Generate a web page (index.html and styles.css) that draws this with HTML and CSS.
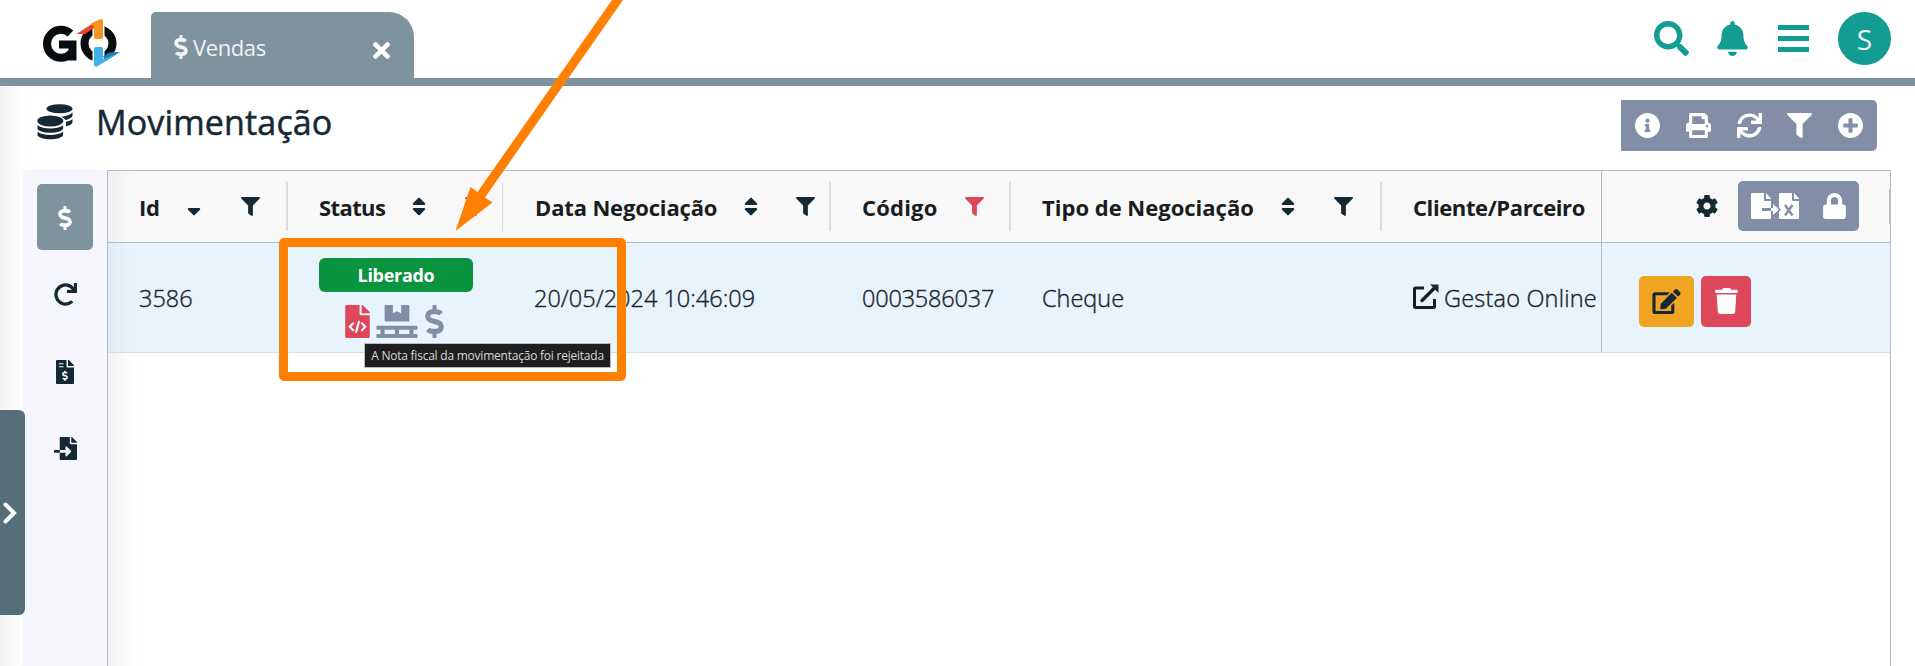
FILE: index.html
```html
<!DOCTYPE html>
<html lang="pt-BR">
<head>
<meta charset="utf-8">
<title>Movimentação</title>
<link rel="stylesheet" href="styles.css">
</head>
<body>
<svg class="defs" aria-hidden="true">
  <symbol id="dollar" viewBox="0 0 288 512"><path d="M209.2 233.4l-108-31.6C88.7 198.2 80 186.5 80 173.5c0-16.3 13.2-29.5 29.5-29.5h66.3c12.2 0 24.2 3.7 34.2 10.5 6.1 4.1 14.3 3.1 19.5-2l34.8-34c7.1-6.9 6.1-18.4-1.8-24.5C238 74.8 207.4 64.1 176 64V16c0-8.8-7.2-16-16-16h-32c-8.8 0-16 7.2-16 16v48h-2.5C45.8 64-5.4 118.7.5 183.6c4.2 46.1 39.4 83.6 83.8 96.6l102.5 30c12.5 3.7 21.2 15.3 21.2 28.3 0 16.3-13.2 29.5-29.5 29.5h-66.3C100 368 88 364.3 78 357.5c-6.1-4.1-14.3-3.1-19.5 2l-34.8 34c-7.1 6.9-6.1 18.4 1.8 24.5 24.5 19.2 55.1 29.9 86.5 30v48c0 8.8 7.2 16 16 16h32c8.8 0 16-7.2 16-16v-48.2c46.6-.9 90.3-28.6 105.7-72.7 21.5-61.6-14.6-124.8-72.5-141.7z"/></symbol>
  <symbol id="filter" viewBox="0 0 512 512"><path d="M487.976 0H24.028C2.71 0-8.047 25.866 7.058 40.971L192 225.941V432c0 7.831 3.821 15.17 10.237 19.662l80 55.98C298.02 518.69 320 507.493 320 487.98V225.941l184.947-184.97C520.021 25.896 509.338 0 487.976 0z"/></symbol>
  <symbol id="sort" viewBox="0 0 320 512"><path d="M41 288h238c21.4 0 32.1 25.9 17 41L177 448c-9.4 9.4-24.6 9.4-33.9 0L24 329c-15.1-15.1-4.4-41 17-41zm255-105L177 64c-9.4-9.4-24.6-9.4-33.9 0L24 183c-15.1 15.1-4.4 41 17 41h238c21.4 0 32.1-25.9 17-41z"/></symbol>
  <symbol id="sort-down" viewBox="0 0 320 512"><path d="M41 288h238c21.4 0 32.1 25.9 17 41L177 448c-9.4 9.4-24.6 9.4-33.9 0L24 329c-15.1-15.1-4.4-41 17-41z"/></symbol>
  <symbol id="file" viewBox="0 0 384 512"><path d="M384 121.9v6.1H256V0h6.1c6.4 0 12.5 2.5 17 7l97.9 98c4.5 4.5 7 10.6 7 16.9zM248 160c-13.2 0-24-10.8-24-24V0H24C10.7 0 0 10.7 0 24v464c0 13.3 10.7 24 24 24h336c13.3 0 24-10.7 24-24V160H248z"/></symbol>
</svg>

<header class="topbar">
  <svg class="logo" viewBox="0 0 78 48" role="img" aria-label="GO">
    <path class="logo-dark" fill="none" stroke-width="8" d="M28.500 14.500A14 14 0 1 0 29.500 34M17 25.500H30.500V41.500"/>
    <circle class="logo-dark" cx="56.500" cy="24.500" r="14" fill="none" stroke-width="8"/>
    <path fill="#fff" d="M50.500 4h12v17h-12zM50.500 28h12v17h-12z"/>
    <path fill="#e8432e" d="M34.500 15 52 3.500V9l-9 6z"/>
    <path fill="#f7931e" d="M48 5 58 .3q3-1 3 2V18q0 2-2 2h-5q-2 0-2-2V7z"/>
    <path fill="#1a7fb0" d="M61 37.500l6-4 11-.5-14 9z"/>
    <path fill="#3fb0e8" d="M52 30q0-2 2-2h5q2 0 2 2v10l14-5-20 12.500q-3 1-3-2z"/>
  </svg>
  <div class="tab">
    <svg class="tab-icon"><use href="#dollar"/></svg>
    <span class="tab-label">Vendas</span>
    <svg class="tab-close" viewBox="0 0 352 352"><path transform="translate(0 -80)" d="M242.72 256l100.07-100.07c12.28-12.28 12.28-32.19 0-44.48l-22.24-22.24c-12.28-12.28-32.19-12.28-44.48 0L176 189.28 75.93 89.21c-12.28-12.28-32.19-12.28-44.48 0L9.21 111.45c-12.28 12.28-12.28 32.19 0 44.48L109.28 256 9.21 356.07c-12.28 12.28-12.28 32.19 0 44.48l22.24 22.24c12.28 12.28 32.2 12.28 44.48 0L176 322.72l100.07 100.07c12.28 12.28 32.2 12.28 44.48 0l22.24-22.24c12.28-12.28 12.28-32.19 0-44.48L242.72 256z"/></svg>
  </div>
  <nav class="top-actions">
    <svg class="ic-search" viewBox="0 0 512 512"><path d="M505 442.7L405.3 343c-4.5-4.5-10.6-7-17-7H372c27.6-35.3 44-79.7 44-128C416 93.1 322.9 0 208 0S0 93.1 0 208s93.1 208 208 208c48.3 0 92.7-16.4 128-44v16.3c0 6.4 2.5 12.5 7 17l99.7 99.7c9.4 9.4 24.6 9.4 33.900 0l28.3-28.3c9.4-9.4 9.4-24.6.1-34zM208 336c-70.7 0-128-57.2-128-128 0-70.7 57.2-128 128-128 70.7 0 128 57.2 128 128 0 70.7-57.2 128-128 128z"/></svg>
    <svg class="ic-bell" viewBox="0 0 448 512"><path d="M224 512c35.32 0 63.97-28.65 63.97-64H160.03c0 35.35 28.65 64 63.97 64zm215.39-149.71c-19.32-20.76-55.47-51.99-55.47-154.29 0-77.7-54.48-139.9-127.94-155.16V32c0-17.67-14.32-32-31.98-32s-31.98 14.33-31.98 32v20.84C118.56 68.1 64.08 130.3 64.08 208c0 102.3-36.15 133.53-55.47 154.29-6 6.45-8.66 14.16-8.61 21.71.11 16.4 12.98 32 32.1 32h383.8c19.12 0 32-15.6 32.1-32 .05-7.55-2.61-15.27-8.61-21.71z"/></svg>
    <svg class="ic-menu" viewBox="0 0 31 27"><path d="M0 0h31v5H0zM0 11h31v5H0zM0 22h31v5H0z"/></svg>
    <span class="avatar">S</span>
  </nav>
</header>

<main class="page">
  <div class="title-row">
    <svg class="coins" viewBox="0 0 36 36">
      <ellipse cx="22.500" cy="4.700" rx="13" ry="4.500"/>
      <path d="M35.500 8.500v3c0 2-3.500 3.800-7 4.500-1-1.500-2.500-2.600-4.500-3.300 5-.4 9.500-1.800 11.500-4.200zM35.500 15v3c0 2-3 3.600-6.500 4.300v-4.500c2.700-.5 5.200-1.400 6.500-2.800z"/>
      <ellipse cx="13.300" cy="17" rx="13" ry="5.500"/>
      <path d="M.5 21.300c3 2.300 8 3.200 12.800 3.200s9.800-.9 12.800-3.200v3c0 2.500-5.800 4.500-12.800 4.500S.5 26.800.5 24.300zM.5 27.700c3 2.300 8 3.300 12.800 3.300s9.800-1 12.800-3.300v3c0 2.500-5.800 4.500-12.800 4.500S.5 33.200.5 30.700z"/>
    </svg>
    <h1>Movimentação</h1>
    <div class="toolbar">
      <svg viewBox="8 8 496 496"><path d="M256 8C119.043 8 8 119.083 8 256c0 136.997 111.043 248 248 248s248-111.003 248-248C504 119.083 392.957 8 256 8zm0 110c23.196 0 42 18.804 42 42s-18.804 42-42 42-42-18.804-42-42 18.804-42 42-42zm56 254c0 6.627-5.373 12-12 12h-88c-6.627 0-12-5.373-12-12v-24c0-6.627 5.373-12 12-12h12v-64h-12c-6.627 0-12-5.373-12-12v-24c0-6.627 5.373-12 12-12h64c6.627 0 12 5.373 12 12v100h12c6.627 0 12 5.373 12 12v24z"/></svg>
      <svg viewBox="0 0 512 512"><path d="M448 192V77.25c0-8.49-3.37-16.62-9.37-22.63L393.37 9.37c-6-6-14.14-9.37-22.63-9.37H96C78.33 0 64 14.33 64 32v160c-35.35 0-64 28.65-64 64v112c0 8.84 7.16 16 16 16h48v96c0 17.67 14.33 32 32 32h320c17.67 0 32-14.33 32-32v-96h48c8.84 0 16-7.16 16-16V256c0-35.35-28.65-64-64-64zm-64 256H128v-96h256v96zm0-224H128V64h192v48c0 8.84 7.16 16 16 16h48v96zm48 72c-13.25 0-24-10.75-24-24 0-13.26 10.75-24 24-24s24 10.74 24 24c0 13.25-10.75 24-24 24z"/></svg>
      <svg viewBox="0 0 512 512"><path d="M440.65 12.57l4 82.77A247.16 247.16 0 0 0 255.83 8C134.73 8 33.91 94.92 12.29 209.82A12 12 0 0 0 24.09 224h49.05a12 12 0 0 0 11.67-9.26 175.91 175.91 0 0 1 317-56.94l-101.46-4.86a12 12 0 0 0-12.57 12v47.41a12 12 0 0 0 12 12H500a12 12 0 0 0 12-12V12a12 12 0 0 0-12-12h-47.37a12 12 0 0 0-11.98 12.57zM255.83 432a175.61 175.61 0 0 1-146-77.8l101.8 4.87a12 12 0 0 0 12.57-12v-47.4a12 12 0 0 0-12-12H12a12 12 0 0 0-12 12V500a12 12 0 0 0 12 12h47.35a12 12 0 0 0 12-12.6l-4.15-82.57A247.17 247.17 0 0 0 255.83 504c121.11 0 221.93-86.92 243.55-201.82a12 12 0 0 0-11.8-14.18h-49.05a12 12 0 0 0-11.67 9.26A175.86 175.86 0 0 1 255.83 432z"/></svg>
      <svg><use href="#filter"/></svg>
      <svg viewBox="8 8 496 496"><path d="M256 8C119 8 8 119 8 256s111 248 248 248 248-111 248-248S393 8 256 8zm144 276c0 6.600-5.400 12-12 12h-92v92c0 6.600-5.400 12-12 12h-56c-6.600 0-12-5.400-12-12v-92h-92c-6.600 0-12-5.400-12-12v-56c0-6.600 5.400-12 12-12h92v-92c0-6.600 5.400-12 12-12h56c6.600 0 12 5.400 12 12v92h92c6.600 0 12 5.400 12 12v56z"/></svg>
    </div>
  </div>

  <div class="workspace">
    <aside class="side">
      <button class="side-btn active"><svg class="s-dollar"><use href="#dollar"/></svg></button>
      <button class="side-btn"><svg class="s-redo" viewBox="0 0 512 512"><path d="M500.33 0h-47.41a12 12 0 0 0-12 12.57l4 82.76A247.42 247.42 0 0 0 256 8C119.34 8 7.9 119.53 8 256.19 8.1 393.07 119.1 504 256 504a247.1 247.1 0 0 0 166.18-63.91 12 12 0 0 0 .48-17.43l-34-34a12 12 0 0 0-16.38-.55A176 176 0 1 1 402.1 157.8l-101.53-4.87a12 12 0 0 0-12.57 12v47.41a12 12 0 0 0 12 12h200.33a12 12 0 0 0 12-12V12a12 12 0 0 0-12-12z"/></svg></button>
      <button class="side-btn"><svg class="s-invoice" viewBox="0 0 384 512"><use href="#file"/><path fill="none" stroke="#f5f6fb" stroke-width="26" d="M64 80h96M64 144h96"/><use class="cut" href="#dollar" x="126" y="222" width="132" height="226"/></svg></button>
      <button class="side-btn"><svg class="s-import" viewBox="0 0 512 512"><path d="M16 288c-8.800 0-16 7.200-16 16v32c0 8.800 7.200 16 16 16h112v-64H16zm489-183L407.100 7c-4.500-4.500-10.600-7-17-7H384v128h128v-6.100c0-6.300-2.500-12.400-7-16.900zm-153 31V0H152c-13.300 0-24 10.700-24 24v264h128v-65.200c0-14.300 17.300-21.400 27.400-11.300L379 308c6.600 6.700 6.600 17.400 0 24l-95.700 96.400c-10.100 10.100-27.400 3-27.400-11.300V352H128v136c0 13.300 10.700 24 24 24h336c13.300 0 24-10.700 24-24V160H376c-13.200 0-24-10.800-24-24z"/></svg></button>
    </aside>

    <section class="grid">
      <div class="row head">
        <div class="cell"><span>Id</span><svg class="ic-sort gap-id"><use href="#sort-down"/></svg><svg class="ic-filter"><use href="#filter"/></svg></div>
        <div class="cell thin"><span>Status</span><svg class="ic-sort gap-sort"><use href="#sort"/></svg><svg class="ic-filter red"><use href="#filter"/></svg></div>
        <div class="cell date"><span>Data Negociação</span><svg class="ic-sort gap-sort"><use href="#sort"/></svg><svg class="ic-filter"><use href="#filter"/></svg></div>
        <div class="cell code-col"><span>Código</span><svg class="ic-filter red"><use href="#filter"/></svg></div>
        <div class="cell type"><span>Tipo de Negociação</span><svg class="ic-sort gap-sort"><use href="#sort"/></svg><svg class="ic-filter"><use href="#filter"/></svg></div>
        <div class="cell last"><span>Cliente/Parceiro</span></div>
        <div class="cell actions-head">
          <svg class="ic-cog" viewBox="8 8 496 496"><path d="M487.4 315.7l-42.6-24.6c4.3-23.2 4.3-47 0-70.2l42.6-24.6c4.9-2.8 7.1-8.6 5.5-14-11.1-35.6-30-67.8-54.7-94.6-3.8-4.1-10-5.1-14.8-2.3L380.8 110c-17.9-15.4-38.5-27.3-60.8-35.1V25.8c0-5.6-3.9-10.5-9.4-11.7-36.7-8.2-74.3-7.8-109.2 0-5.5 1.2-9.4 6.1-9.4 11.7V75c-22.2 7.9-42.8 19.8-60.8 35.1L88.7 85.5c-4.9-2.8-11-1.9-14.8 2.3-24.7 26.7-43.6 58.9-54.7 94.6-1.7 5.4.6 11.2 5.5 14L67.3 221c-4.3 23.2-4.3 47 0 70.2l-42.6 24.6c-4.9 2.8-7.1 8.6-5.5 14 11.1 35.6 30 67.8 54.7 94.6 3.8 4.1 10 5.1 14.8 2.3l42.6-24.6c17.9 15.4 38.5 27.3 60.8 35.1v49.2c0 5.6 3.9 10.5 9.4 11.7 36.7 8.2 74.3 7.8 109.2 0 5.5-1.2 9.4-6.1 9.4-11.7v-49.2c22.2-7.9 42.8-19.8 60.8-35.1l42.6 24.6c4.9 2.8 11 1.9 14.8-2.3 24.7-26.7 43.6-58.900 54.7-94.6 1.5-5.5-.7-11.3-5.6-14.1zM256 336c-44.1 0-80-35.9-80-80s35.9-80 80-80 80 35.9 80 80-35.9 80-80 80z"/></svg>
          <div class="head-tools">
            <svg class="ic-export" viewBox="0 0 48 26">
              <path d="M1 0h12v7q0 1 1 1h6v7h-9v3h9v7q0 1-1 1H1q-1 0-1-1V1q0-1 1-1zM15 0l5 5.500v.5h-5z"/>
              <path d="M20 15h2v-4l6 5.500-6 5.500v-4h-2z"/>
              <path d="M29 0h12v7q0 1 1 1h6v17q0 1-1 1H29q-1 0-1-1v-6.500l2-2-2-2V1q0-1 1-1zM43 0l5 5.500v.5h-5z"/>
              <path class="x-mark" d="M34 12l7.500 10.500M41.500 12 34 22.500"/>
            </svg>
            <svg class="ic-lock" viewBox="0 0 448 512"><path d="M400 224h-24v-72C376 68.2 307.800 0 224 0S72 68.200 72 152v72H48c-26.500 0-48 21.500-48 48v192c0 26.500 21.500 48 48 48h352c26.500 0 48-21.500 48-48V272c0-26.500-21.500-48-48-48zm-104 0H152v-72c0-39.700 32.300-72 72-72s72 32.300 72 72v72z"/></svg>
          </div>
          <i class="edge"></i>
        </div>
      </div>

      <div class="row body">
        <div class="cell"><span>3586</span></div>
        <div class="cell status">
          <span class="badge">Liberado</span>
          <div class="status-icons">
            <svg class="i-code" viewBox="0 0 384 512"><use href="#file"/><path class="code" d="M124 284 72 338l52 54M260 284l52 54-52 54M214 262l-44 156"/></svg>
            <svg class="i-pallet" viewBox="0 0 640 512"><path d="M144 256h352c8.800 0 16-7.200 16-16V16c0-8.800-7.200-16-16-16H384v128l-64-32-64 32V0H144c-8.800 0-16 7.200-16 16v224c0 8.800 7.200 16 16 16zm480 128c8.800 0 16-7.200 16-16v-32c0-8.800-7.200-16-16-16H16c-8.800 0-16 7.200-16 16v32c0 8.800 7.200 16 16 16h48v64H16c-8.800 0-16 7.200-16 16v32c0 8.800 7.200 16 16 16h608c8.800 0 16-7.200 16-16v-32c0-8.800-7.200-16-16-16h-48v-64h48zm-336 64H128v-64h160v64zm224 0H352v-64h160v64z"/></svg>
            <svg class="i-dollar"><use href="#dollar"/></svg>
          </div>
          <div class="tooltip"><span>A Nota fiscal da movimentação foi rejeitada</span></div>
        </div>
        <div class="cell"><span>20/05/2024 10:46:09</span></div>
        <div class="cell code-value"><span>0003586037</span></div>
        <div class="cell"><span>Cheque</span></div>
        <div class="cell last client">
          <svg class="ic-link" viewBox="0 0 26 25"><path fill="none" stroke-width="3" stroke-linejoin="round" d="M11 4H2.500Q1.500 4 1.500 5v17.500q0 1 1 1H20.500q1 0 1-1V15"/><path fill="none" stroke-width="3.400" stroke-linecap="round" d="M9 16.500 21.500 4"/><path stroke="none" d="M17 .5h8q.5 0 .5.500V9z"/></svg>
          <span>Gestao Online</span>
        </div>
        <div class="cell row-actions">
          <button class="btn edit"><svg viewBox="0 0 576 512"><path d="M402.6 83.2l90.2 90.2c3.8 3.8 3.8 10 0 13.8L274.4 405.6l-92.8 10.3c-12.4 1.4-22.9-9.1-21.5-21.5l10.3-92.8L388.8 83.2c3.8-3.8 10-3.8 13.8 0zm162-22.9l-48.8-48.8c-15.2-15.2-39.9-15.2-55.2 0l-35.4 35.4c-3.8 3.8-3.8 10 0 13.8l90.2 90.2c3.8 3.8 10 3.8 13.8 0l35.4-35.4c15.2-15.3 15.2-40 0-55.2zM384 346.2V448H64V128h229.8c3.2 0 6.2-1.3 8.5-3.5l40-40c7.6-7.6 2.2-20.5-8.5-20.5H48C21.5 64 0 85.5 0 112v352c0 26.5 21.5 48 48 48h352c26.5 0 48-21.5 48-48V306.2c0-10.7-12.9-16-20.5-8.5l-40 40c-2.2 2.3-3.5 5.3-3.5 8.5z"/></svg></button>
          <button class="btn trash"><svg viewBox="0 0 448 512"><path d="M432 32H312l-9.4-18.7A24 24 0 0 0 281.1 0H166.8a23.72 23.72 0 0 0-21.4 13.3L136 32H16A16 16 0 0 0 0 48v32a16 16 0 0 0 16 16h416a16 16 0 0 0 16-16V48a16 16 0 0 0-16-16zM53.2 467a48 48 0 0 0 47.9 45h245.8a48 48 0 0 0 47.9-45L416 128H32z"/></svg></button>
        </div>
      </div>
    </section>
  </div>
</main>

<div class="drawer"><svg viewBox="0 0 14 22"><path d="M2.500 2.500 11 11l-8.500 8.500"/></svg></div>

<div class="callout-box"></div>
<svg class="callout-arrow" viewBox="0 0 220 240"><path d="M172 0h11L45 197.500l7.500 5L15.500 231 30.500 187l7 5z"/></svg>
</body>
</html>
```

FILE: styles.css
```css
* { box-sizing: border-box; }
html, body { height: 100%; }
body {
  margin: 0;
  display: flex;
  flex-direction: column;
  position: relative;
  overflow: hidden;
  background: #fff;
  color: #212529;
  font-family: "Open Sans", "Noto Sans", sans-serif;
}
svg { display: block; flex: none; fill: currentColor; }
button { border: 0; margin: 0; padding: 0; background: none; color: inherit; font: inherit; }
span { white-space: nowrap; }
.defs { position: absolute; width: 0; height: 0; }

.topbar {
  flex: none;
  height: 86px;
  border-bottom: 8px solid #7e939d;
  display: flex;
  align-items: flex-start;
  padding: 12px 24px 0 42px;
}
.logo { width: 78px; height: 48px; margin: 7px 31px 0 0; }
.logo-dark { stroke: #070c0e; }
.tab {
  width: 263px;
  height: 66px;
  background: #7e939d;
  color: #f2f2f2;
  border-radius: 5px 25px 0 0;
  display: flex;
  align-items: center;
  padding: 6px 24px 0 23px;
}
.tab-icon { width: 14px; height: 24px; margin-top: -2px; }
.tab-label { font-size: 22px; letter-spacing: -.4px; margin: -3px 0 0 5px; }
.tab-close { width: 17px; height: 17px; margin: 5px 0 0 auto; color: #fff; }
.top-actions { margin-left: auto; display: flex; align-items: flex-start; color: #139d92; }
.ic-search { width: 35px; height: 35px; margin: 9px 28px 0 0; }
.ic-bell { width: 31px; height: 35px; margin: 9px 30px 0 0; }
.ic-menu { width: 31px; height: 27px; margin: 13px 29px 0 0; }
.avatar {
  width: 53px; height: 53px;
  border-radius: 50%;
  background: #139d92;
  color: #f2f2f2;
  font-size: 28px;
  display: flex; align-items: center; justify-content: center;
}

.page { flex: 1; display: flex; flex-direction: column; min-height: 0; background: linear-gradient(90deg, #f1f1f1 0, #fafafa 12px, #fff 25px); }
.title-row { height: 84px; flex: none; display: flex; align-items: flex-start; padding: 14px 38px 0 37px; color: #142934; }
.coins { width: 36px; height: 36px; margin-top: 4px; }
h1 { margin: -3px 0 0 23px; font-size: 34px; line-height: 50px; font-weight: 500; letter-spacing: .15px; -webkit-text-stroke: .5px currentColor; }
.toolbar {
  margin-left: auto;
  width: 256px; height: 51px;
  background: #828ea5;
  color: #fff;
  border-radius: 0 5px 5px 0;
  display: flex; align-items: center; justify-content: space-between;
  padding: 0 14px;
}
.toolbar svg { width: 25px; height: 25px; }

.workspace { flex: 1; display: flex; min-height: 0; padding: 0 24px 0 23px; }
.side { width: 84px; flex: none; background: #f5f6fb; padding: 14px; display: flex; flex-direction: column; gap: 12px; color: #142934; }
.side-btn { width: 56px; height: 65px; border-radius: 5px; display: flex; align-items: center; justify-content: center; }
.side-btn.active { height: 66px; margin-bottom: -1px; background: #7e939d; color: #fff; }
.s-dollar { width: 14px; height: 24px; margin-top: 2px; }
.s-redo { width: 23px; height: 23px; margin-top: 2px; }
.s-invoice { width: 18px; height: 24px; margin-top: 2px; }
.s-import { width: 23px; height: 23px; margin-top: 2px; }
.cut { fill: #f5f6fb; }

.grid {
  flex: 1; min-width: 0;
  border: solid #b9bac8; border-width: 1px 1px 0;
  background: linear-gradient(90deg, #f0f0f0 0, #fafafa 14px, #fff 30px);
}
.row { display: grid; grid-template-columns: 180px 215px 328px 180px 371px 219px 289px; }
.cell { display: flex; align-items: center; padding-left: 31px; position: relative; min-width: 0; }
.head {
  height: 72px;
  border-bottom: 1px solid #b9bac8;
  background: linear-gradient(90deg, #efefef 0, #f8f8f8 24px);
  font-weight: 700; font-size: 22px; letter-spacing: -.4px; color: #191d20;
}
.head .cell { padding-right: 28px; }
.head .cell.thin { padding-right: 19px; letter-spacing: -.6px; }
.head .cell.date { padding-right: 16px; padding-left: 32px; letter-spacing: -.15px; }
.head .code-col { letter-spacing: .2px; padding-right: 27px; }
.head .type { letter-spacing: 0; padding-right: 29px; }
.head .cell::after { content: ""; position: absolute; right: 0; top: 11px; width: 2px; height: 49px; background: #d8dde2; }
.head .cell.thin::after { width: 1px; }
.head .cell.last::after, .head .actions-head::after { display: none; }
.head .cell.last { overflow: hidden; padding-right: 0; }
.head svg { color: #142934; }
.head svg.red { color: #de475a; }
.ic-sort { width: 14px; height: 23px; }
.gap-sort { margin-left: 27px; }
.gap-id { margin-left: 28px; }
.ic-filter { width: 19px; height: 19px; margin-left: auto; }
.head .actions-head { border-left: 1px solid #b9bac8; padding: 0 31px 2px 0; justify-content: flex-end; }
.head .ic-cog { width: 22px; height: 22px; margin: 0 20px 0 0; }
.head-tools { width: 121px; height: 50px; border-radius: 5px; background: #828ea5; display: flex; align-items: center; justify-content: space-between; padding: 0 13px; }
.head .head-tools svg { color: #fff; }
.ic-export { width: 48px; height: 26px; }
.x-mark { fill: none; stroke: #828ea5; stroke-width: 2.400; }
.ic-lock { width: 23px; height: 26px; }
.edge { position: absolute; right: 0; top: 18px; width: 1px; height: 35px; background: #b9bac8; }

.body { height: 110px; border-bottom: 1px solid #d9deea; background: linear-gradient(90deg, #dfecf6 0, #e7f4fe 24px); font-size: 23.500px; font-weight: 300; }
.body .cell > span:not(.badge) { -webkit-text-stroke: .4px currentColor; }
.code-value { letter-spacing: -.2px; }
.status { flex-direction: column; align-items: flex-start; padding-top: 15px; }
.badge { width: 154px; height: 34px; line-height: 34px; flex: none; border-radius: 6px; background: #0a9440; color: #fff; font-size: 18px; font-weight: 700; letter-spacing: -.3px; text-align: center; }
.status-icons { display: flex; margin: 13px 0 0 26px; color: #828ea5; }
.i-code { width: 25px; height: 33px; color: #de475a; }
.code { fill: none; stroke: #e7f4fe; stroke-width: 34; stroke-linecap: round; }
.i-pallet { width: 42px; height: 33px; margin-left: 6px; }
.i-dollar { width: 19px; height: 33px; margin-left: 7px; }
.tooltip {
  position: absolute; z-index: 2;
  left: 76px; top: 100px;
  width: 247px; height: 25px;
  background: #1f1f1f; border: 1px solid #bdbdbd; color: #d8d8d8;
  font-size: 12px; font-weight: 400; letter-spacing: -.23px; line-height: 23px; text-align: center;
}
.client { padding-right: 0; overflow: hidden; }
.ic-link { width: 26px; height: 25px; margin: -2px 5px 0 0; stroke: #191d20; }
.client span { letter-spacing: .2px; }
.row-actions { border-left: 1px solid #b9bac8; padding-left: 37px; gap: 7px; }
.btn { height: 51px; border-radius: 5px; display: flex; align-items: center; justify-content: center; margin-top: 7px; }
.edit { width: 55px; background: #f0a422; color: #142934; }
.edit svg { width: 29px; height: 25px; }
.trash { width: 50px; background: #de475a; color: #fff; }
.trash svg { width: 23px; height: 26px; }

.drawer { position: absolute; left: 0; top: 410px; width: 25px; height: 205px; border-radius: 0 6px 6px 0; background: #566e79; display: flex; align-items: center; padding-left: 3px; }
.drawer svg { width: 14px; height: 22px; fill: none; stroke: #fff; stroke-width: 4; stroke-linecap: round; }

.callout-box { position: absolute; left: 279px; top: 238px; width: 347px; height: 143px; border: 9px solid #ff8000; border-radius: 5px; }
.callout-arrow { position: absolute; left: 440px; top: 0; width: 220px; height: 240px; color: #ff8000; }
```
